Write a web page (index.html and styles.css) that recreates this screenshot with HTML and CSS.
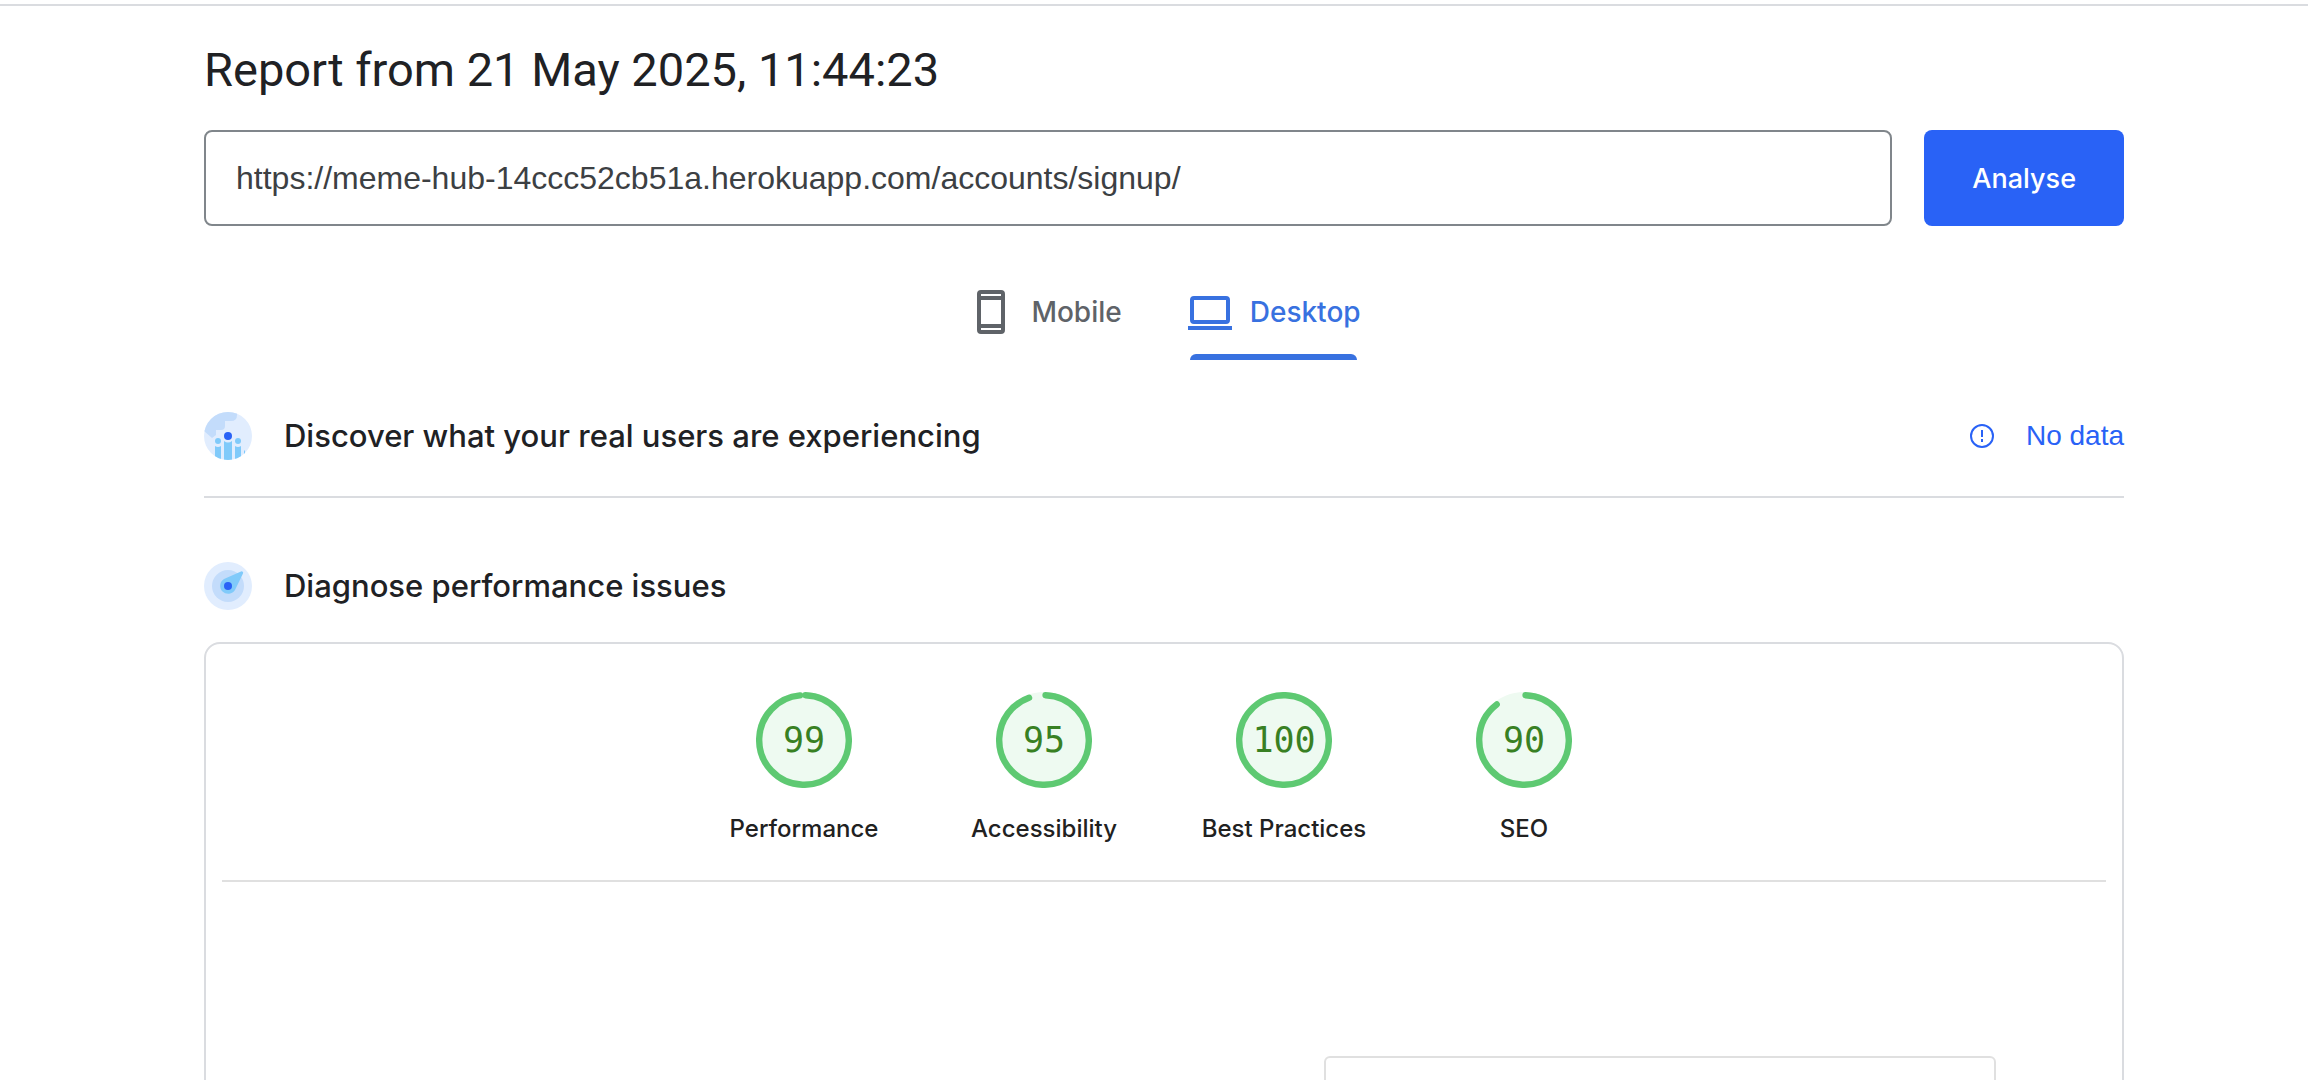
FILE: index.html
```html
<!DOCTYPE html>
<html lang="en">
<head>
<meta charset="utf-8">
<title>PageSpeed Insights</title>
<link rel="stylesheet" href="styles.css">
</head>
<body>
<main class="page">
  <h1 class="report-title">Report from 21 May 2025, 11:44:23</h1>
  <form class="url-form">
    <input class="url-input" type="text" aria-label="Web page URL" value="https://meme-hub-14ccc52cb51a.herokuapp.com/accounts/signup/">
    <button class="analyse" type="button">Analyse</button>
  </form>
  <div class="tabs" role="tablist">
    <button class="tab" type="button" role="tab" aria-selected="false">
      <svg class="tab-icon" viewBox="0 0 48 48" aria-hidden="true"><path fill="currentColor" fill-rule="evenodd" d="M14 2h20a4 4 0 0 1 4 4v36a4 4 0 0 1-4 4H14a4 4 0 0 1-4-4V6a4 4 0 0 1 4-4zM14 6v2h20V6zM14 12v24h20V12zM14 40v2h20v-2z"/></svg>
      <span>Mobile</span>
    </button>
    <button class="tab tab-active" type="button" role="tab" aria-selected="true">
      <svg class="tab-icon" viewBox="0 0 48 48" aria-hidden="true"><path fill="currentColor" fill-rule="evenodd" d="M8 8h32a4 4 0 0 1 4 4v20a4 4 0 0 1-4 4H8a4 4 0 0 1-4-4V12a4 4 0 0 1 4-4zM8 12v20h32V12zM2 38h44v4H2z"/></svg>
      <span>Desktop</span>
    </button>
  </div>
  <section class="section-head section-ruled">
    <svg class="section-icon" viewBox="0 0 48 48" aria-hidden="true">
      <clipPath id="disc"><circle cx="24" cy="24" r="24"/></clipPath>
      <g clip-path="url(#disc)">
        <path fill="#e1edfe" d="M0 0h48v48H0z"/>
        <path fill="#c3dcfb" d="M0 0h33v3q0 6-6 6h-6v5q0 4-4 4h-5v5l-4 3-8-7z"/>
        <g fill="#80cafa"><circle cx="14" cy="29" r="3"/><circle cx="34" cy="29" r="3"/><path d="M11 34q3 2 6 0v14h-6zM31 34q3 2 6 0v14h-6zM20 29q4 3 8 0v19h-8zM40 39l1-1v6h-1z"/></g>
        <circle cx="24" cy="24" r="4" fill="#2962f6"/>
      </g>
    </svg>
    <h2 class="section-title">Discover what your real users are experiencing</h2>
    <a class="no-data" href="#field-data">
      <svg class="info-icon" viewBox="0 0 24 24" aria-hidden="true"><circle cx="12" cy="12" r="11" fill="none" stroke="currentColor" stroke-width="2"/><path fill="currentColor" d="M11 6h2v7h-2zM11 15h2v3h-2z"/></svg>
      No data
    </a>
  </section>
  <section class="section-head">
    <svg class="section-icon" viewBox="0 0 48 48" aria-hidden="true">
      <circle cx="24" cy="24" r="24" fill="#e1edfe"/>
      <circle cx="24" cy="24" r="16" fill="#c3dcfb"/>
      <path fill="#80cafa" d="M37 9.500a1.500 1.500 0 0 1 2 2L31 28a8 8 0 1 1-11-11z"/>
      <circle cx="24" cy="24" r="4" fill="#2962f6"/>
    </svg>
    <h2 class="section-title">Diagnose performance issues</h2>
  </section>
  <section class="card">
    <div class="gauges">
      <a class="gauge" href="#performance">
        <span class="dial"><svg class="ring" viewBox="0 0 120 120" aria-hidden="true"><circle class="ring-base" cx="60" cy="60" r="60"/><circle class="ring-arc" cx="60" cy="60" r="56" stroke-dasharray="344.300 352"/></svg><span class="score">99</span></span>
        <span class="gauge-label">Performance</span>
      </a>
      <a class="gauge" href="#accessibility">
        <span class="dial"><svg class="ring" viewBox="0 0 120 120" aria-hidden="true"><circle class="ring-base" cx="60" cy="60" r="60"/><circle class="ring-arc" cx="60" cy="60" r="56" stroke-dasharray="330.300 352"/></svg><span class="score">95</span></span>
        <span class="gauge-label">Accessibility</span>
      </a>
      <a class="gauge" href="#best-practices">
        <span class="dial"><svg class="ring" viewBox="0 0 120 120" aria-hidden="true"><circle class="ring-base" cx="60" cy="60" r="60"/><circle class="ring-arc" cx="60" cy="60" r="56" stroke-dasharray="352 352"/></svg><span class="score">100</span></span>
        <span class="gauge-label">Best Practices</span>
      </a>
      <a class="gauge" href="#seo">
        <span class="dial"><svg class="ring" viewBox="0 0 120 120" aria-hidden="true"><circle class="ring-base" cx="60" cy="60" r="60"/><circle class="ring-arc" cx="60" cy="60" r="56" stroke-dasharray="312.700 352"/></svg><span class="score">90</span></span>
        <span class="gauge-label">SEO</span>
      </a>
    </div>
    <div class="overview"><div class="screenshot"></div></div>
  </section>
</main>
</body>
</html>
```

FILE: styles.css
```css
* { box-sizing: border-box; }

html { scrollbar-width: none; }

body {
  margin: 0;
  background: #fff;
  color: #202124;
  font-family: "Liberation Sans", Arial, sans-serif;
}

.page {
  margin-top: 4px;
  padding: 32px 184px 0 204px;
  border-top: 2px solid #dadce0;
}

.report-title {
  margin: 0;
  font-family: Roboto, sans-serif;
  font-size: 47px;
  font-weight: 400;
  line-height: 64px;
}

.url-form {
  display: flex;
  gap: 32px;
  margin-top: 28px;
}

.url-input {
  flex: 1;
  min-width: 0;
  height: 96px;
  padding: 0 30px;
  border: 2px solid #80868b;
  border-radius: 8px;
  background: #fff;
  color: #3c4043;
  font-family: inherit;
  font-size: 32px;
}

.analyse {
  padding: 0 48px;
  border: 0;
  border-radius: 8px;
  background: #2962f6;
  color: #fff;
  font-family: Inter, sans-serif;
  font-size: 27px;
  font-weight: 500;
}

.tabs {
  display: flex;
  justify-content: center;
  gap: 64px;
  margin-top: 38px;
}

.tab {
  display: flex;
  align-items: center;
  gap: 16px;
  height: 96px;
  padding: 0;
  border: 0;
  background: none;
  color: #5f6368;
  font-family: Inter, sans-serif;
  font-size: 28px;
  font-weight: 500;
  position: relative;
}

.tab-active { color: #3871e0; }

.tab-active::after {
  content: "";
  position: absolute;
  left: 4px;
  right: 4px;
  bottom: 0;
  height: 6px;
  border-radius: 6px 6px 0 0;
  background: #3871e0;
}

.tab-icon {
  width: 48px;
  height: 48px;
}

.section-head {
  display: flex;
  align-items: center;
  gap: 32px;
  margin-top: 52px;
}

.section-ruled {
  padding-bottom: 36px;
  border-bottom: 2px solid #dadce0;
}

.section-ruled + .section-head { margin-top: 64px; }

.section-icon {
  width: 48px;
  height: 48px;
}

.section-title {
  flex: 1;
  margin: 0;
  font-family: Inter, sans-serif;
  font-size: 31px;
  font-weight: 500;
  line-height: 48px;
}

.no-data {
  display: flex;
  align-items: center;
  gap: 32px;
  color: #2962f6;
  font-size: 28px;
  line-height: 48px;
  text-decoration: none;
}

.info-icon {
  width: 24px;
  height: 24px;
}

.card {
  margin-top: 32px;
  padding: 0 16px;
  border: 2px solid #dadce0;
  border-radius: 16px;
}

.gauges {
  display: flex;
  justify-content: center;
  padding: 48px 0 34px;
  border-bottom: 2px solid #e0e0e0;
}

.gauge {
  display: flex;
  flex-direction: column;
  align-items: center;
  gap: 24px;
  width: 240px;
  color: #212121;
  text-decoration: none;
}

.dial {
  display: grid;
  place-items: center;
}

.ring {
  grid-area: 1 / 1;
  width: 96px;
  height: 96px;
}

.ring-base { fill: #eefaf1; }

.ring-arc {
  fill: none;
  stroke: #5ec972;
  stroke-width: 8;
  stroke-linecap: round;
  transform: rotate(-88deg);
  transform-origin: center;
}

.score {
  grid-area: 1 / 1;
  color: #388023;
  font-family: "DejaVu Sans Mono", monospace;
  font-size: 35px;
  line-height: 48px;
}

.gauge-label {
  font-family: Inter, sans-serif;
  font-size: 24px;
  font-weight: 500;
  line-height: 34px;
}

.overview {
  display: flex;
  justify-content: flex-end;
  padding: 174px 110px 48px;
}

.screenshot {
  width: 672px;
  max-width: 100%;
  height: 480px;
  border: 2px solid #e0e0e0;
  border-radius: 6px;
}
```
